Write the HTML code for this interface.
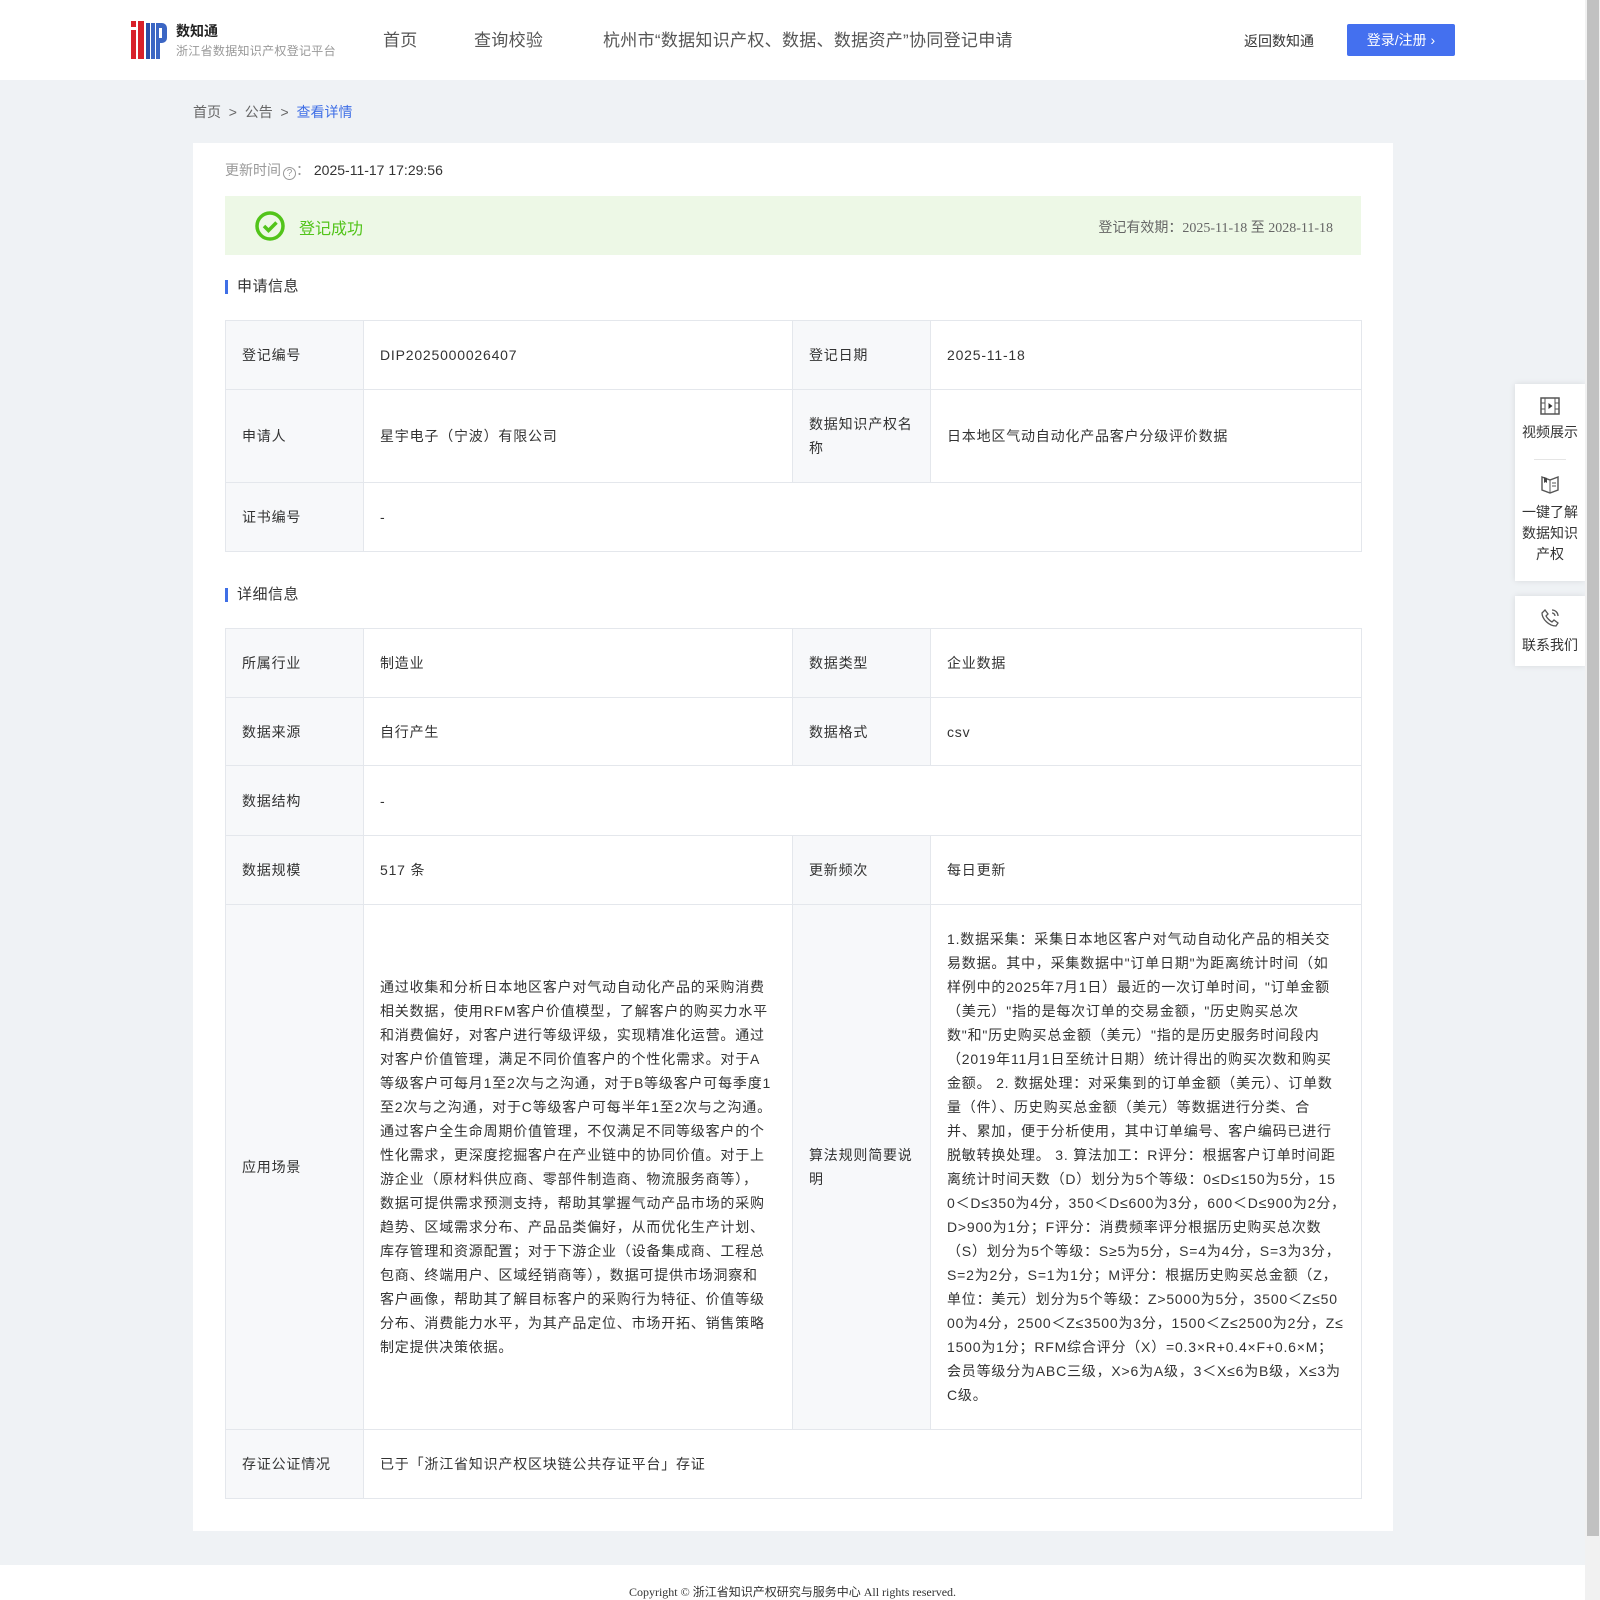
<!DOCTYPE html>
<html><head><meta charset="utf-8"><style>
*{margin:0;padding:0;box-sizing:border-box}
body{width:1600px;height:1600px;overflow:hidden;background:#eff2f5;font-family:"Liberation Sans","Noto Sans CJK SC",sans-serif;color:#333;position:relative}
.hdr{position:absolute;left:0;top:0;width:1585px;height:80px;background:#fff}
.abs{position:absolute;white-space:nowrap}
.nav{font-size:17px;color:#555;top:26px;letter-spacing:0.3px}
.card{position:absolute;left:193px;top:143px;width:1200px;height:1388px;background:#fff}
table{position:absolute;left:32px;border-collapse:collapse;table-layout:fixed;font-size:14px;color:#333}
td{border:1px solid #e4e7ec;padding:0 16px;vertical-align:middle;line-height:24px;letter-spacing:0.8px}
td.l{background:#f7f8fa}
.sec{position:absolute;left:32px;font-size:15px;color:#333;padding-left:9px;border-left:3px solid #3f6fe6;line-height:14px;letter-spacing:0.5px}
.side{position:absolute;left:1515px;width:70px;background:#fff;box-shadow:0 0 6px rgba(0,0,0,.1);font-size:14px;color:#333;text-align:center;line-height:22px}
</style></head><body>
<div class="hdr">
 <svg class="abs" style="left:131px;top:21px" width="36" height="38" viewBox="0 0 36 38">
  <rect x="0" y="0" width="5" height="6" fill="#d8212a"/><rect x="0" y="9" width="5" height="29" fill="#d8212a"/>
  <rect x="7" y="0" width="6" height="38" fill="#d8212a"/>
  <rect x="15" y="2" width="4" height="36" fill="#2a4fa8"/><rect x="20" y="2" width="4" height="36" fill="#3b66c4"/>
  <path d="M25 2h6a5 5 0 0 1 5 5v10a5 5 0 0 1-5 5h-6z" fill="#3b66c4"/><rect x="25" y="22" width="4" height="16" fill="#3b66c4"/>
  <rect x="28" y="7" width="3" height="10" fill="#fff"/>
 </svg>
 <div class="abs" style="left:176px;top:21px;font-size:14px;color:#222;font-weight:bold">数知通</div>
 <div class="abs" style="left:176px;top:42px;font-size:12px;color:#999;letter-spacing:0.3px">浙江省数据知识产权登记平台</div>
 <div class="abs nav" style="left:383px">首页</div>
 <div class="abs nav" style="left:474px">查询校验</div>
 <div class="abs nav" style="left:603px">杭州市“数据知识产权、数据、数据资产”协同登记申请</div>
 <div class="abs" style="left:1244px;top:31px;font-size:14px;color:#333">返回数知通</div>
 <div class="abs" style="left:1347px;top:24px;width:108px;height:32px;background:#4470ef;border-radius:2px;color:#fff;font-size:14px;line-height:32px;text-align:center">登录/注册 ›</div>
</div>
<div class="abs" style="left:193px;top:102px;font-size:14px;color:#666">首页 &nbsp;&gt;&nbsp; 公告 &nbsp;&gt;&nbsp; <span style="color:#3f6fe6">查看详情</span></div>
<div class="card">
 <div class="abs" style="left:32px;top:17px;font-size:14px;color:#999">更新时间<span style="display:inline-block;width:13px;height:13px;border:1px solid #999;border-radius:50%;font-size:10px;line-height:11px;text-align:center;vertical-align:-1px;margin-left:2px">?</span>： <span style="color:#333">2025-11-17 17:29:56</span></div>
 <div class="abs" style="left:32px;top:53px;width:1136px;height:59px;background:#edf8e6">
  <svg class="abs" style="left:29px;top:14px" width="32" height="32" viewBox="0 0 32 32"><circle cx="16" cy="16" r="13" fill="none" stroke="#52c41a" stroke-width="3.5"/><path d="M10 16l4.5 4.5 8-8" fill="none" stroke="#52c41a" stroke-width="3.5"/></svg>
  <div class="abs" style="left:74px;top:19px;font-size:16px;color:#52c41a">登记成功</div>
  <div class="abs" style="right:28px;top:21px;font-size:14px;color:#666;font-family:'Liberation Serif','Noto Sans CJK SC',serif">登记有效期：2025-11-18 至 2028-11-18</div>
 </div>
 <div class="sec" style="top:137px">申请信息</div>
 <table style="top:177px;width:1136px">
  <col style="width:138px"><col style="width:429px"><col style="width:138px"><col style="width:431px">
  <tr style="height:69px"><td class="l">登记编号</td><td>DIP2025000026407</td><td class="l">登记日期</td><td>2025-11-18</td></tr>
  <tr style="height:93px"><td class="l">申请人</td><td>星宇电子（宁波）有限公司</td><td class="l">数据知识产权名称</td><td>日本地区气动自动化产品客户分级评价数据</td></tr>
  <tr style="height:69px"><td class="l">证书编号</td><td colspan="3">-</td></tr>
 </table>
 <div class="sec" style="top:445px">详细信息</div>
 <table style="top:485px;width:1136px">
  <col style="width:138px"><col style="width:429px"><col style="width:138px"><col style="width:431px">
  <tr style="height:69px"><td class="l">所属行业</td><td>制造业</td><td class="l">数据类型</td><td>企业数据</td></tr>
  <tr style="height:68px"><td class="l">数据来源</td><td>自行产生</td><td class="l">数据格式</td><td>csv</td></tr>
  <tr style="height:70px"><td class="l">数据结构</td><td colspan="3">-</td></tr>
  <tr style="height:69px"><td class="l">数据规模</td><td>517 条</td><td class="l">更新频次</td><td>每日更新</td></tr>
  <tr style="height:525px"><td class="l">应用场景</td><td style="white-space:nowrap">通过收集和分析日本地区客户对气动自动化产品的采购消费<br>相关数据，使用RFM客户价值模型，了解客户的购买力水平<br>和消费偏好，对客户进行等级评级，实现精准化运营。通过<br>对客户价值管理，满足不同价值客户的个性化需求。对于A<br>等级客户可每月1至2次与之沟通，对于B等级客户可每季度1<br>至2次与之沟通，对于C等级客户可每半年1至2次与之沟通。<br>通过客户全生命周期价值管理，不仅满足不同等级客户的个<br>性化需求，更深度挖掘客户在产业链中的协同价值。对于上<br>游企业（原材料供应商、零部件制造商、物流服务商等），<br>数据可提供需求预测支持，帮助其掌握气动产品市场的采购<br>趋势、区域需求分布、产品品类偏好，从而优化生产计划、<br>库存管理和资源配置；对于下游企业（设备集成商、工程总<br>包商、终端用户、区域经销商等），数据可提供市场洞察和<br>客户画像，帮助其了解目标客户的采购行为特征、价值等级<br>分布、消费能力水平，为其产品定位、市场开拓、销售策略<br>制定提供决策依据。</td><td class="l">算法规则简要说明</td><td style="white-space:nowrap">1.数据采集：采集日本地区客户对气动自动化产品的相关交<br>易数据。其中，采集数据中"订单日期"为距离统计时间（如<br>样例中的2025年7月1日）最近的一次订单时间，"订单金额<br>（美元）"指的是每次订单的交易金额，"历史购买总次<br>数"和"历史购买总金额（美元）"指的是历史服务时间段内<br>（2019年11月1日至统计日期）统计得出的购买次数和购买<br>金额。 2. 数据处理：对采集到的订单金额（美元）、订单数<br>量（件）、历史购买总金额（美元）等数据进行分类、合<br>并、累加，便于分析使用，其中订单编号、客户编码已进行<br>脱敏转换处理。 3. 算法加工：R评分：根据客户订单时间距<br>离统计时间天数（D）划分为5个等级：0≤D≤150为5分，15<br>0＜D≤350为4分，350＜D≤600为3分，600＜D≤900为2分，<br>D&gt;900为1分；F评分：消费频率评分根据历史购买总次数<br>（S）划分为5个等级：S≥5为5分，S=4为4分，S=3为3分，<br>S=2为2分，S=1为1分；M评分：根据历史购买总金额（Z，<br>单位：美元）划分为5个等级：Z&gt;5000为5分，3500＜Z≤50<br>00为4分，2500＜Z≤3500为3分，1500＜Z≤2500为2分，Z≤<br>1500为1分；RFM综合评分（X）=0.3×R+0.4×F+0.6×M；<br>会员等级分为ABC三级，X&gt;6为A级，3＜X≤6为B级，X≤3为<br>C级。</td></tr>
  <tr style="height:69px"><td class="l">存证公证情况</td><td colspan="3">已于「浙江省知识产权区块链公共存证平台」存证</td></tr>
 </table>
</div>
<div class="abs" style="left:0;top:1565px;width:1585px;height:35px;background:#fff"></div>
<div class="abs" style="left:0;top:1583px;width:1585px;text-align:center;font-size:12px;color:#333;font-family:'Liberation Serif','Noto Sans CJK SC',serif">Copyright © 浙江省知识产权研究与服务中心 All rights reserved.</div>
<div class="side" style="top:384px;height:197px">
 <svg style="margin-top:13px" width="20" height="18" viewBox="0 0 20 18"><rect x="1" y="1" width="18" height="16" fill="none" stroke="#555" stroke-width="1.5"/><path d="M5 1v16M15 1v16M1 6h4M1 12h4M15 6h4M15 12h4" stroke="#555"/><path d="M8.5 6v6l4-3z" fill="#333"/></svg>
 <div>视频展示</div>
 <div style="width:32px;height:1px;background:#e5e5e5;margin:16px auto 14px"></div>
 <svg width="20" height="20" viewBox="0 0 20 20"><path d="M2 3l8 3 8-3v13l-8 3-8-3z" fill="none" stroke="#555" stroke-width="1.4"/><path d="M10 6v13" stroke="#555"/><path d="M4 3v6l1.5-1 1.5 1V4" fill="#444"/><path d="M12 9h4M12 12h4" stroke="#555"/></svg>
 <div style="line-height:21px;margin-top:2px">一键了解<br>数据知识<br>产权</div>
</div>
<div class="side" style="top:596px;height:70px">
 <svg style="margin-top:12px" width="20" height="20" viewBox="0 0 20 20"><path d="M5 2l3 4-2 2c1 2 4 5 6 6l2-2 4 3-2 3C9 18 2 11 2 5z" fill="none" stroke="#555" stroke-width="1.3"/><path d="M12 2a6 6 0 0 1 6 6M12 5a3 3 0 0 1 3 3" fill="none" stroke="#555" stroke-width="1.3"/></svg>
 <div>联系我们</div>
</div>
<div class="abs" style="left:1585px;top:0;width:15px;height:1600px;background:#f1f1f1"></div>
<div class="abs" style="left:1587px;top:0;width:12px;height:1536px;background:#c1c1c1"></div>
</body></html>
